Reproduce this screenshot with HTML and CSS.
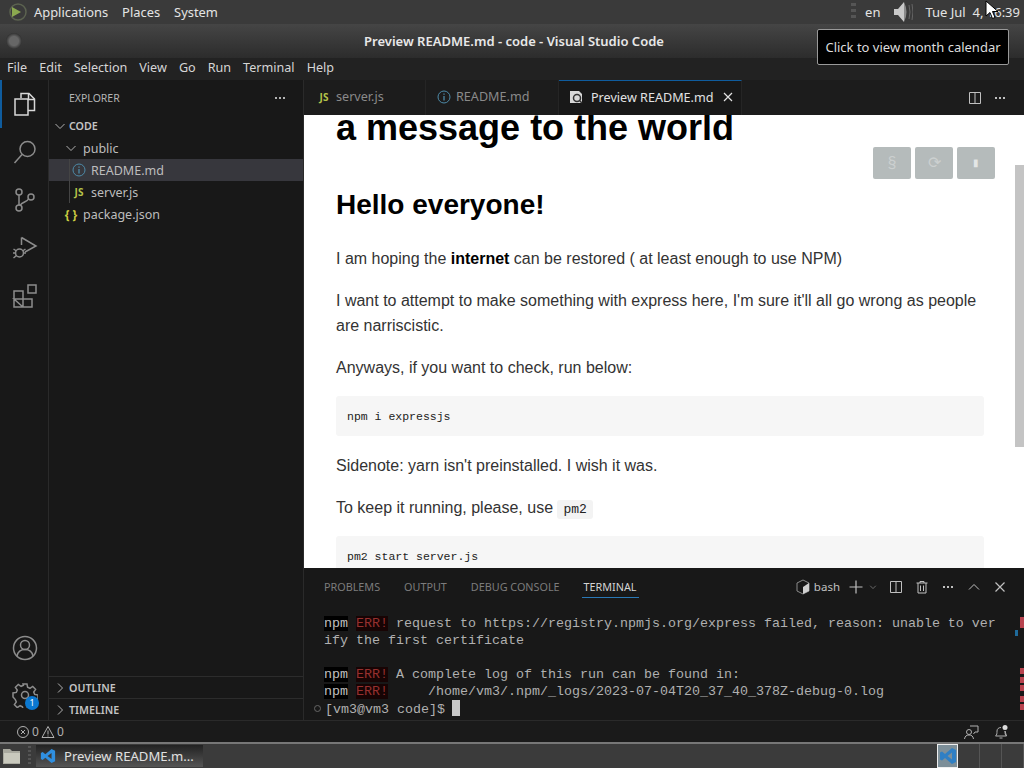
FILE: index.html
```html
<!DOCTYPE html>
<html>

<head>
    <title>Preview README.md - code - Visual Studio Code</title>
    <link rel="stylesheet" href="styles.css">
</head>

<body>
    <svg class="defs">
        <symbol id="split" viewBox="0 0 16 16"><path d="M2.5 2.5h11v11h-11zM8 2.5v11" fill="none" stroke="currentColor"/></symbol>
        <symbol id="dots" viewBox="0 0 16 16"><path d="M3 7h2v2H3zM7 7h2v2H7zM11 7h2v2h-2z" fill="currentColor"/></symbol>
        <symbol id="chev-down" viewBox="0 0 16 16"><path d="M3.5 6l4.5 4.5L12.500 6" fill="none" stroke="currentColor"/></symbol>
        <symbol id="chev-right" viewBox="0 0 16 16"><path d="M6 3.500l4.500 4.500L6 12.500" fill="none" stroke="currentColor"/></symbol>
        <symbol id="info" viewBox="0 0 16 16"><circle cx="8" cy="8" r="6" fill="none" stroke="currentColor"/><path d="M8 7v4.500M8 4.500v1.200" stroke="currentColor" stroke-width="1.300"/></symbol>
    </svg>

    <div class="top-panel">
        <svg class="distro" width="24" height="24" viewBox="0 0 24 24">
            <circle cx="14" cy="12" r="8" fill="none" stroke="#5c6350" stroke-width="1.500"/>
            <path d="M8 7l9 5-9 5z" fill="#8ba94f"/>
        </svg>
        <span class="panel-item">Applications</span>
        <span class="panel-item">Places</span>
        <span class="panel-item">System</span>
        <span class="spacer"></span>
        <span class="panel-grip"></span>
        <span class="panel-lang">en</span>
        <svg class="volume" width="24" height="24" viewBox="0 0 24 24">
            <path d="M5 9h4l6-7v20l-6-7H5z" fill="#c9c9c9"/>
            <path d="M15 2q5 10 0 20z" fill="#8a8a8a"/>
            <path d="M20 5q2 7 0 14M23 4q2 8 0 16" fill="none" stroke="#666" stroke-width="1"/>
        </svg>
        <span class="panel-clock">Tue Jul &nbsp;4, 16:39</span>
    </div>

    <div class="titlebar">
        <span class="wm-button"></span>
        <span class="title-text">Preview README.md - code - Visual Studio Code</span>
    </div>

    <div class="menubar">
        <span>File</span><span>Edit</span><span>Selection</span><span>View</span><span>Go</span><span>Run</span><span>Terminal</span><span>Help</span>
    </div>

    <div class="workbench">
        <div class="activitybar">
            <div class="activity active">
                <svg width="26" height="26" viewBox="0 0 26 26" fill="none" stroke="currentColor" stroke-width="1.500"><path d="M9 7V2.500h8l5.500 5.500v11.500H16"/><path d="M16.500 3v5.500h6"/><path d="M3 8h13v16H3z"/></svg>
            </div>
            <div class="activity">
                <svg width="26" height="26" viewBox="0 0 26 26" fill="none" stroke="currentColor" stroke-width="1.500"><circle cx="15.500" cy="10" r="7.500"/><path d="M10 15.500L2.500 24"/></svg>
            </div>
            <div class="activity">
                <svg width="26" height="26" viewBox="0 0 26 26" fill="none" stroke="currentColor" stroke-width="1.500"><circle cx="7" cy="5" r="3"/><circle cx="7" cy="21" r="3"/><circle cx="19" cy="10" r="3"/><path d="M7 8v10M16.500 12C15 15 10 15 8 18.500"/></svg>
            </div>
            <div class="activity">
                <svg width="26" height="26" viewBox="0 0 26 26" fill="none" stroke="currentColor" stroke-width="1.500"><path d="M9.500 2.500L24 11l-11 6M9.500 2.500V10"/><circle cx="7.500" cy="18" r="4"/><path d="M1.500 14l3 2M1 18h3M1.500 23l3-2.500M13.500 14l-3 2M14 18h-3"/></svg>
            </div>
            <div class="activity">
                <svg width="26" height="26" viewBox="0 0 26 26" fill="none" stroke="currentColor" stroke-width="1.500"><path d="M2 8h9v16H2zM2 16h18v8h-9zM11 8v8"/><path d="M16 2h8v8h-8z"/></svg>
            </div>
            <span class="spacer"></span>
            <div class="activity account">
                <svg width="26" height="26" viewBox="0 0 26 26" fill="none" stroke="currentColor" stroke-width="1.500"><circle cx="13" cy="13" r="11.500"/><circle cx="13" cy="10" r="4.500"/><path d="M5 21c1-5 4-6.500 8-6.500s7 1.500 8 6.500"/></svg>
            </div>
            <div class="activity gear">
                <svg width="26" height="26" viewBox="0 0 26 26" fill="none" stroke="currentColor" stroke-width="1.500"><circle cx="13" cy="13" r="3.500"/><path d="M11 2h4l.6 3.300 2.300 1 2.800-1.900 2.900 2.900-1.900 2.800 1 2.300 3.300.6v4l-3.300.6-1 2.300 1.900 2.800-2.900 2.900-2.800-1.900-2.300 1-.6 2.300h-4l-.6-2.300-2.300-1-2.800 1.900-2.900-2.900 1.900-2.800-1-2.300L1 15v-4l3.300-.6 1-2.300-1.900-2.800 2.900-2.900 2.800 1.900 2.300-1z"/></svg>
                <span class="badge">1</span>
            </div>
        </div>

        <div class="sidebar">
            <div class="side-head">
                <span>EXPLORER</span>
                <svg class="side-dots" width="16" height="16"><use href="#dots"/></svg>
            </div>
            <div class="tree">
                <div class="row bold"><svg class="twist" width="16" height="16"><use href="#chev-down"/></svg>CODE</div>
                <div class="row depth1"><svg class="twist" width="16" height="16"><use href="#chev-down"/></svg>public</div>
                <div class="row depth2 selected"><svg class="file-icon info" width="16" height="16"><use href="#info"/></svg>README.md</div>
                <div class="row depth2"><span class="file-icon js">JS</span>server.js</div>
                <div class="row depth1"><span class="file-icon json">{ }</span>package.json</div>
            </div>
            <span class="spacer"></span>
            <div class="side-section outline"><svg class="twist" width="16" height="16"><use href="#chev-right"/></svg>OUTLINE</div>
            <div class="side-section"><svg class="twist" width="16" height="16"><use href="#chev-right"/></svg>TIMELINE</div>
        </div>

        <div class="main">
            <div class="tabs">
                <div class="tab"><span class="file-icon js">JS</span>server.js</div>
                <div class="tab"><svg class="file-icon info" width="16" height="16"><use href="#info"/></svg>README.md</div>
                <div class="tab current">
                    <svg class="file-icon" width="16" height="16" viewBox="0 0 16 16"><path d="M2 2h9l3 3v9H2z" fill="#d8d8d8"/><circle cx="9" cy="9" r="3.500" fill="none" stroke="#333" stroke-width="1.500"/><path d="M11.500 11.500L14 14" stroke="#333" stroke-width="1.500"/></svg>
                    Preview README.md
                    <svg class="tab-close" width="14" height="14" viewBox="0 0 14 14"><path d="M3 3l8 8M11 3l-8 8" stroke="currentColor" stroke-width="1.200"/></svg>
                </div>
                <span class="spacer"></span>
                <svg class="tab-action" width="16" height="16"><use href="#split"/></svg>
                <svg class="tab-action" width="16" height="16"><use href="#dots"/></svg>
            </div>

            <div class="preview">
                <div class="preview-buttons">
                    <span class="preview-btn">§</span>
                    <span class="preview-btn">⟳</span>
                    <span class="preview-btn small">▮</span>
                </div>
                <div class="scrollbar"></div>
                <h1>a message to the world</h1>
                <h2>Hello everyone!</h2>
                <p>I am hoping the <strong>internet</strong> can be restored ( at least enough to use NPM)</p>
                <p>I want to attempt to make something with express here, I'm sure it'll all go wrong as people are narriscistic.</p>
                <p>Anyways, if you want to check, run below:</p>
                <pre>npm i expressjs</pre>
                <p>Sidenote: yarn isn't preinstalled. I wish it was.</p>
                <p>To keep it running, please, use <code>pm2</code></p>
                <pre>pm2 start server.js</pre>
            </div>

            <div class="panel">
                <div class="panel-tabs">
                    <span>PROBLEMS</span>
                    <span>OUTPUT</span>
                    <span>DEBUG CONSOLE</span>
                    <span class="on">TERMINAL</span>
                    <span class="spacer"></span>
                    <div class="panel-actions">
                        <svg class="bash-icon" width="16" height="16" viewBox="0 0 16 16"><path d="M8 1l6 3v8l-6 3-6-3V4z" fill="none" stroke="#8a8a8a"/><path d="M8 8l6-4v8l-6 3z" fill="#d0d0d0"/></svg>
                        <span class="bash">bash</span>
                        <svg class="act-plus" width="16" height="16" viewBox="0 0 16 16"><path d="M8 1.500v13M1.500 8h13" stroke="currentColor" stroke-width="1.200"/></svg>
                        <svg class="act-small" width="10" height="16"><use href="#chev-down" width="10" height="16"/></svg>
                        <svg class="act" width="16" height="16"><use href="#split"/></svg>
                        <svg class="act" width="16" height="16" viewBox="0 0 16 16"><path d="M2.500 4h11M6 4V2.500h4V4M4 4v10h8V4M6.500 6.500V12M9.500 6.500V12" fill="none" stroke="currentColor"/></svg>
                        <svg class="act" width="16" height="16"><use href="#dots"/></svg>
                        <svg class="act" width="16" height="16" viewBox="0 0 16 16"><path d="M3 10.500L8 5.500l5 5" fill="none" stroke="currentColor"/></svg>
                        <svg class="act" width="16" height="16" viewBox="0 0 16 16"><path d="M3.500 3.500l9 9M12.500 3.500l-9 9" stroke="currentColor" stroke-width="1.200"/></svg>
                    </div>
                </div>
                <div class="terminal">
                    <div class="line"><span class="npm">npm</span> <span class="err">ERR!</span> request to https://registry.npmjs.org/express failed, reason: unable to ver</div>
                    <div class="line">ify the first certificate</div>
                    <div class="line">&nbsp;</div>
                    <div class="line"><span class="npm">npm</span> <span class="err">ERR!</span> A complete log of this run can be found in:</div>
                    <div class="line"><span class="npm">npm</span> <span class="err">ERR!</span>     /home/vm3/.npm/_logs/2023-07-04T20_37_40_378Z-debug-0.log</div>
                    <div class="line prompt"><span class="deco"></span>[vm3@vm3 code]$ <span class="cursor"></span></div>
                    <div class="marks">
                        <i class="mark blue"></i><i class="mark m0"></i><i class="mark m1"></i><i class="mark m2"></i><i class="mark m3"></i><i class="mark m4"></i><i class="mark m5"></i>
                    </div>
                </div>
            </div>
        </div>
    </div>

    <div class="statusbar">
        <svg width="14" height="14" viewBox="0 0 14 14" fill="none" stroke="currentColor"><circle cx="7" cy="7" r="5.500"/><path d="M5 5l4 4M9 5l-4 4"/></svg>
        <span>0</span>
        <svg width="14" height="14" viewBox="0 0 14 14" fill="none" stroke="currentColor"><path d="M7 1.500L13 12.500H1zM7 5.500v4M7 10.500v1"/></svg>
        <span>0</span>
        <span class="spacer"></span>
        <svg class="status-right" width="16" height="16" viewBox="0 0 16 16" fill="none" stroke="currentColor"><circle cx="6" cy="8" r="2.500"/><path d="M1.500 15c.5-3 2-4 4.500-4s4 1 4.500 4M7 2h8v6h-3l-1.500 2"/></svg>
        <svg class="status-right" width="16" height="16" viewBox="0 0 16 16" fill="none" stroke="currentColor"><path d="M2.500 12c1.500-1 1.500-3 1.500-5 0-2 1.500-3.500 4-3.500M12 7c0 2 0 4 1.500 5zM2.500 12h11M6.500 14h3"/><circle cx="12" cy="3.500" r="2.500" fill="#ddd" stroke="none"/></svg>
    </div>

    <div class="taskbar">
        <svg class="folder" width="20" height="20" viewBox="0 0 20 20"><path d="M1 3h7l2 2h8v13H1z" fill="#a9a99f"/><path d="M2 7h16v10H2z" fill="#c9c9bd"/></svg>
        <span class="task-grip"></span>
        <div class="task">
            <svg width="16" height="16" viewBox="0 0 18 18"><path d="M13 1l4 2v12l-4 2-7-6-3 2.500-2-1V5.500l2-1L6 7zM13 5.500L8.500 9l4.500 3.500z" fill="#2f8fe0"/></svg>
            <span>Preview README.m...</span>
        </div>
        <span class="spacer"></span>
        <div class="pager">
            <span class="desk on">
                <svg width="18" height="18" viewBox="0 0 18 18"><path d="M13 1l4 2v12l-4 2-7-6-3 2.500-2-1V5.500l2-1L6 7zM13 5.500L8.500 9l4.500 3.500z" fill="#2f7fc4"/></svg>
            </span>
            <span class="desk"></span>
            <span class="desk"></span>
            <span class="desk"></span>
        </div>
    </div>

    <div class="tooltip">Click to view month calendar</div>
    <svg class="pointer" width="14" height="20" viewBox="0 0 14 20"><path d="M1 1v15l4-3.500 2.500 6 2.500-1-2.500-6H13z" fill="#fff" stroke="#000"/></svg>
</body>
</html>
```

FILE: styles.css
```css
html, body {
    height: 100%;
}

body {
    margin: 0;
    width: 1024px;
    height: 768px;
    overflow: hidden;
    display: flex;
    flex-direction: column;
    font-family: "Noto Sans", sans-serif;
    font-size: 13px;
    color: #ccc;
    background-color: #181818;
    position: relative;
}

.defs {
    display: none;
}

.spacer {
    flex: 1;
}

/* desktop panel */
.top-panel {
    height: 24px;
    display: flex;
    align-items: center;
    background-color: #3a3a3a;
    color: #e4e4e4;
    font-size: 12.900px;
    padding-left: 4px;
    flex-shrink: 0;
}

.distro {
    margin-right: 6px;
}

.panel-item {
    margin-right: 14px;
}

.panel-grip {
    width: 5px;
    height: 18px;
    margin-right: 9px;
    background: repeating-linear-gradient(#555 0 3px, transparent 3px 6px);
}

.panel-lang {
    margin-right: 9px;
    font-size: 13px;
}

.volume {
    margin-right: 12px;
}

.panel-clock {
    margin-right: 4px;
    font-size: 13px;
}

/* window title */
.titlebar {
    height: 34px;
    flex-shrink: 0;
    display: flex;
    align-items: center;
    justify-content: center;
    position: relative;
    padding-left: 4px;
    background: linear-gradient(#454545, #2c2c2c);
    color: #e8e8e8;
    font-weight: 600;
    font-size: 13px;
}

.wm-button {
    position: absolute;
    left: 6px;
    top: 9px;
    width: 16px;
    height: 16px;
    border-radius: 50%;
    background: radial-gradient(#666 40%, #333 70%);
}

.menubar {
    height: 22px;
    flex-shrink: 0;
    box-sizing: border-box;
    display: flex;
    align-items: center;
    gap: 12px;
    padding: 0 0 4px 7px;
    background-color: #222;
    color: #d6d6d6;
    font-size: 12.600px;
}

/* workbench */
.workbench {
    flex: 1;
    display: flex;
    min-height: 0;
}

.activitybar {
    width: 48px;
    flex-shrink: 0;
    display: flex;
    flex-direction: column;
    background-color: #181818;
    border-right: 1px solid #2a2a2a;
    color: #8c8c8c;
}

.activity {
    height: 48px;
    display: flex;
    align-items: center;
    justify-content: center;
    position: relative;
    padding-left: 1px;
}

.activity.active {
    color: #d8d8d8;
    box-shadow: inset 2px 0 0 #0f5c9e;
}

.account {
    top: 2px;
}

.gear {
    height: 50px;
}

.badge {
    position: absolute;
    left: 25px;
    top: 26px;
    width: 14px;
    height: 14px;
    border-radius: 50%;
    background-color: #0b78d0;
    color: #fff;
    font-size: 9px;
    line-height: 14px;
    text-align: center;
}

.sidebar {
    width: 254px;
    flex-shrink: 0;
    display: flex;
    flex-direction: column;
    background-color: #181818;
    border-right: 1px solid #2a2a2a;
}

.side-head {
    height: 35px;
    display: flex;
    align-items: center;
    justify-content: space-between;
    padding: 0 15px 0 20px;
    font-size: 10.500px;
    color: #b4b4b4;
}

.tree {
    font-size: 12.500px;
}

.row {
    height: 22px;
    display: flex;
    align-items: center;
    color: #bdbdbd;
    padding-left: 3px;
}

.row.bold, .side-section {
    font-weight: 600;
    font-size: 10.700px;
    color: #c4c4c4;
}

.row.bold {
    padding-bottom: 1px;
    box-sizing: border-box;
}

.twist {
    margin-right: 4px;
    color: #b0b0b0;
    flex-shrink: 0;
}

.row.bold .twist, .side-section .twist {
    margin-right: 1px;
}

.depth1 {
    padding-left: 14px;
}

.depth2 {
    padding-left: 22px;
    position: relative;
}

.depth2::before {
    content: "";
    position: absolute;
    left: 20px;
    top: 0;
    bottom: 0;
    width: 1px;
    background-color: #444;
}

.selected {
    background-color: #37373d;
}

.file-icon {
    width: 16px;
    margin-right: 4px;
    flex-shrink: 0;
    display: inline-block;
    text-align: center;
}

.file-icon.info {
    color: #4d8aa8;
}

.js {
    color: #b5c34a;
    font-size: 10px;
    font-weight: 700;
}

.json {
    color: #cbcb41;
    font-size: 12px;
    font-weight: 700;
}

.side-section {
    height: 21px;
    display: flex;
    align-items: center;
    padding-left: 3px;
    border-top: 1px solid #2c2c2c;
}

.side-section.outline {
    height: 20px;
    padding-top: 1px;
}

.main {
    flex: 1;
    min-width: 0;
    display: flex;
    flex-direction: column;
}

.tabs {
    height: 35px;
    flex-shrink: 0;
    display: flex;
    align-items: center;
    background-color: #1c1c1c;
    color: #8a8a8a;
    font-size: 12.600px;
}

.tab {
    height: 35px;
    box-sizing: border-box;
    display: flex;
    align-items: center;
    padding: 0 0 2px 12px;
    width: 122px;
    border-right: 1px solid #252525;
}

.tab:nth-child(2) {
    width: 133px;
    padding-left: 10px;
}

.tab.current {
    width: 183px;
    background-color: #181818;
    color: #e2e2e2;
    border-top: 1px solid #0f5c9e;
    padding-left: 9px;
    white-space: nowrap;
}

.tab.current .file-icon {
    margin-right: 7px;
}

.tab-close {
    margin-left: 7px;
    flex-shrink: 0;
}

.tab-action {
    margin-right: 9px;
    color: #c0c0c0;
}

.tab-action:last-child {
    margin-right: 16px;
}

/* markdown preview */
.preview {
    height: 453px;
    flex-shrink: 0;
    overflow: hidden;
    position: relative;
    box-sizing: border-box;
    padding: 0 40px 0 32px;
    background-color: #fff;
    color: #333;
    font-family: "Liberation Sans", Arial, sans-serif;
    font-size: 16px;
    line-height: 25px;
}

.preview-buttons {
    position: absolute;
    right: 29px;
    top: 32px;
    display: flex;
    gap: 4px;
}

.preview-btn {
    width: 38px;
    height: 32px;
    background-color: #b5bbbb;
    border-radius: 2px;
    color: #ccd0d0;
    text-align: center;
    line-height: 32px;
    font-size: 16px;
}

.preview-btn.small {
    font-size: 10px;
    color: #e4e6e6;
}

.scrollbar {
    position: absolute;
    right: 0;
    top: 50px;
    width: 9px;
    height: 282px;
    background-color: #c4c4c4;
}

.preview h1 {
    margin: -5px 0 0;
    font-size: 36px;
    line-height: 36px;
    font-weight: 700;
    color: #000;
}

.preview h2 {
    margin: 41px 0 0;
    font-size: 28px;
    line-height: 36px;
    font-weight: 700;
    color: #000;
}

.preview p {
    margin: 0 0 17px;
}

.preview h2 + p {
    margin-top: 22.500px;
}

.preview strong {
    color: #000;
}

.preview pre {
    margin: -1px 0 17px;
    height: 40px;
    padding: 0 11px;
    line-height: 41px;
    background-color: #f6f6f6;
    border-radius: 3px;
    font-family: "Liberation Mono", monospace;
    font-size: 11.500px;
    color: #222;
}

.preview code {
    padding: 2px 6px;
    line-height: 1;
    background-color: #f3f3f3;
    border-radius: 3px;
    font-family: "Liberation Mono", monospace;
    font-size: 13px;
    color: #222;
}

/* terminal panel */
.panel {
    flex: 1;
    min-height: 0;
    display: flex;
    flex-direction: column;
    background-color: #181818;
    color: #bdbdbd;
}

.panel-tabs {
    height: 35px;
    flex-shrink: 0;
    display: flex;
    align-items: center;
    gap: 24px;
    padding: 2px 0 0 20px;
    box-sizing: border-box;
    font-size: 10.800px;
    color: #7c7c7c;
}

.panel-tabs .on {
    color: #d4d4d4;
    position: relative;
}

.panel-tabs .on::after {
    content: "";
    position: absolute;
    left: -2px;
    right: -2px;
    bottom: -4px;
    height: 1px;
    background-color: #2a78b5;
}

.panel-actions {
    display: flex;
    align-items: center;
    color: #c0c0c0;
    padding-right: 16px;
}

.bash-icon {
    margin-right: 3px;
}

.bash {
    font-size: 11.500px;
    margin: 0 8px 0 0;
}

.act-plus {
    margin-right: 4px;
}

.act-small {
    margin-right: 10px;
    color: #999;
}

.act {
    margin-right: 10px;
}

.act:last-child {
    margin-right: 0;
}

.terminal {
    flex: 1;
    position: relative;
    padding: 12px 0 0 20px;
    font-family: "Liberation Mono", monospace;
    font-size: 13.330px;
    line-height: 17px;
    color: #b0b0b0;
}

.line {
    height: 17px;
    white-space: pre;
}

.npm {
    background-color: #000;
    color: #c0c0c0;
}

.err {
    background-color: #170404;
    color: #96302f;
}

.prompt {
    position: relative;
    margin-left: 1px;
}

.deco {
    position: absolute;
    left: -11px;
    top: 5px;
    width: 5px;
    height: 5px;
    border: 1px solid #666;
    border-radius: 50%;
}

.cursor {
    display: inline-block;
    width: 8px;
    height: 16px;
    margin-left: -1px;
    vertical-align: -3px;
    background-color: #c8c8c8;
}

.mark {
    position: absolute;
    right: 0;
    width: 4px;
    height: 6px;
    background-color: #b8434e;
}

.mark.blue {
    right: 6px;
    top: 27px;
    width: 3px;
    background-color: #1f6a9a;
}

.m0 { top: 14px; height: 11px; }
.m1 { top: 65px; }
.m2 { top: 74px; }
.m3 { top: 82px; }
.m4 { top: 93px; }
.m5 { top: 101px; }

/* status and task bars */
.statusbar {
    height: 22px;
    flex-shrink: 0;
    display: flex;
    align-items: center;
    gap: 2px;
    padding: 0 15px 0 16px;
    background-color: #1a1a1a;
    border-top: 1px solid #2a2a2a;
    box-sizing: border-box;
    font-size: 12px;
    color: #b0b0b0;
}

.status-right {
    margin-left: 12px;
}

.taskbar {
    height: 26px;
    flex-shrink: 0;
    display: flex;
    align-items: center;
    box-sizing: border-box;
    background-color: #3b3b3b;
    border-top: 2px solid #777;
}

.folder {
    margin-left: 2px;
}

.task-grip {
    width: 3px;
    height: 20px;
    margin: 0 5px 0 6px;
    background: repeating-linear-gradient(#555 0 2px, transparent 2px 4px);
}

.task {
    width: 167px;
    height: 22px;
    display: flex;
    align-items: center;
    gap: 8px;
    padding-left: 4px;
    box-sizing: border-box;
    background: linear-gradient(#222, #555);
    color: #e0e0e0;
    font-size: 13.100px;
    white-space: nowrap;
}

.pager {
    display: flex;
    height: 24px;
}

.desk {
    width: 22px;
    box-sizing: border-box;
    border-right: 1px solid #555;
    display: flex;
    align-items: center;
    justify-content: center;
}

.desk.on {
    width: 21px;
    background-color: #7d8f99;
    border: 1px solid #eee;
}

.tooltip {
    position: absolute;
    left: 817px;
    top: 29px;
    width: 192px;
    height: 36px;
    box-sizing: border-box;
    text-align: center;
    line-height: 34px;
    background-color: #000;
    border: 1px solid #999;
    border-radius: 2px;
    color: #ddd;
    font-size: 13px;
}

.pointer {
    position: absolute;
    left: 985px;
    top: 0;
}
```
